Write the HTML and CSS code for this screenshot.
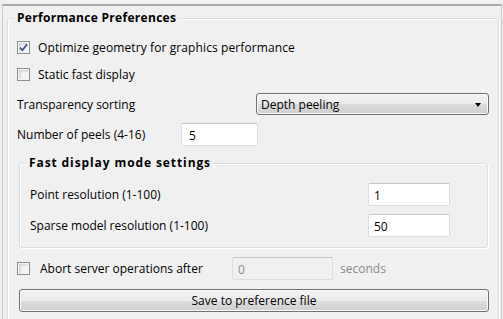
FILE: index.html
```html
<!doctype html>
<html lang="en">
    <head>
        <meta charset="UTF-8" />
        <meta name="viewport" content="width=device-width, initial-scale=1.0" />
        <title>Performance Preferences</title>
        <link rel="stylesheet" href="styles.css">
    </head>
    <body>
        <div class="frame">
            <div class="group outer">
                <div class="group-title">Performance Preferences</div>

                <label class="row check-row first">
                    <span class="cb checked">
                        <svg width="9" height="9" viewBox="0 0 9 9"><path d="M1 4.6 L3.4 7.2 L8 1.4" fill="none" stroke="#3d5286" stroke-width="1.7"/></svg>
                    </span>
                    <span class="wide">Optimize geometry for graphics performance</span>
                </label>

                <label class="row check-row second">
                    <span class="cb"></span>
                    <span>Static fast display</span>
                </label>

                <div class="row combo-row">
                    <span class="label">Transparency sorting</span>
                    <div class="combo">
                        <span>Depth peeling</span>
                        <span class="arrow"></span>
                    </div>
                </div>

                <div class="row peels-row">
                    <span class="label peels-label">Number of peels (4-16)</span>
                    <div class="field peels">5</div>
                </div>

                <div class="group inner">
                    <div class="group-title">Fast display mode settings</div>
                    <div class="row res-row first">
                        <span class="label res-label">Point resolution (1-100)</span>
                        <div class="field res">1</div>
                    </div>
                    <div class="row res-row">
                        <span class="label res-label">Sparse model resolution (1-100)</span>
                        <div class="field res">50</div>
                    </div>
                </div>

                <div class="row abort-row">
                    <span class="cb"></span>
                    <span class="abort-label">Abort server operations after</span>
                    <div class="field disabled abort">0</div>
                    <span class="muted">seconds</span>
                </div>

                <button class="btn" type="button">Save to preference file</button>
            </div>
        </div>
    </body>
</html>
```

FILE: styles.css
```css
body {
    margin: 0;
    background-color: #f0f0f0;
    font-family: "Open Sans", "Liberation Sans", Arial, sans-serif;
    font-size: 12px;
    color: #000;
    overflow: hidden;
}
.frame {
    margin: 4px 1px 0 2px;
    height: 330px;
    border-top: 2px solid #a9abad;
    border-left: 1px solid #c9cbcd;
    border-right: 1px solid #c9cbcd;
}
.group {
    border: 1px solid #d5dfe5;
    border-radius: 3px;
    box-shadow: inset 1px 1px 0 #fff, 1px 1px 0 #fff;
}
.group-title {
    width: max-content;
    margin: -8px 0 0 -2px;
    padding: 0 2px;
    line-height: 14px;
    background-color: #f0f0f0;
    font-weight: bold;
    font-size: 12px;
    letter-spacing: 0.3px;
}
.outer {
    margin: 12px 2px 0 4px;
    height: 340px;
    padding: 0 9px;
}
.inner {
    margin: 17px 1px 0 2px;
    height: 83px;
    padding: 0 10px;
}
.inner .group-title {
    margin-left: -3px;
    letter-spacing: 0.9px;
}
.row {
    display: flex;
    align-items: center;
}
.wide {
    letter-spacing: 0.1px;
}
.check-row {
    height: 20px;
}
.check-row.first {
    margin-top: 12px;
}
.check-row.second {
    margin-top: 7px;
}
.cb {
    width: 13px;
    height: 13px;
    box-sizing: border-box;
    border: 1px solid #8f8f8f;
    background-color: #f4f4f4;
    box-shadow: inset 0 0 0 1px #f4f4f4, inset 2px 2px 3px #c6cad0;
    margin-right: 8px;
    display: flex;
    align-items: center;
    justify-content: center;
    flex: none;
}
.combo-row {
    margin-top: 9px;
    justify-content: space-between;
}
.combo {
    width: 233px;
    height: 22px;
    box-sizing: border-box;
    border: 1px solid #707070;
    border-radius: 3px;
    background: linear-gradient(#f2f2f2 0%, #ebebeb 50%, #dddddd 51%, #cfcfcf 100%);
    box-shadow: inset 0 0 0 1px #fbfbfb;
    display: flex;
    align-items: center;
    justify-content: space-between;
    padding: 0 7px 0 4px;
}
.arrow {
    width: 0;
    height: 0;
    border-left: 3.5px solid transparent;
    border-right: 3.5px solid transparent;
    border-top: 4px solid #000;
    margin-top: 1px;
}
.peels-row {
    margin-top: 8px;
}
.peels-label {
    width: 164px;
}
.field {
    height: 23px;
    box-sizing: border-box;
    border: 1px solid #dadde2;
    border-top-color: #c2c5ca;
    border-radius: 2px;
    background-color: #fff;
    display: flex;
    align-items: center;
    padding: 1px 0 0 7px;
}
.peels {
    width: 77px;
}
.res-row {
    margin-top: 8px;
}
.res-row.first {
    margin-top: 13px;
}
.res-label {
    width: 338px;
}
.res {
    width: 82px;
    padding-left: 5px;
}
.abort-row {
    margin-top: 9px;
}
.abort-label {
    width: 192px;
    margin-left: 2px;
}
.disabled {
    background-color: #f0f0f0;
    color: #8b8b8b;
}
.abort {
    width: 101px;
    padding-left: 5px;
}
.muted {
    color: #8b8b8b;
    margin-left: 7px;
}
.btn {
    display: block;
    width: 470px;
    height: 23px;
    margin: 9px 0 0 2px;
    border: 1px solid #707070;
    border-radius: 3px;
    background: linear-gradient(#f2f2f2 0%, #ebebeb 50%, #dddddd 51%, #cfcfcf 100%);
    box-shadow: inset 0 0 0 1px #fbfbfb;
    font-family: inherit;
    font-size: 12px;
    color: #000;
    padding: 0;
}
```
